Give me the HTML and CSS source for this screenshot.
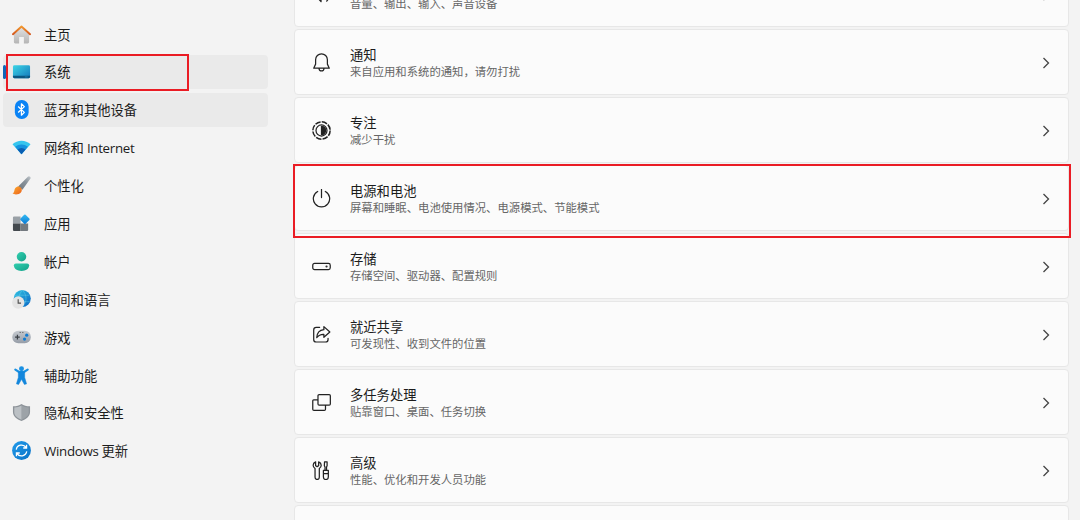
FILE: index.html
```html
<!DOCTYPE html>
<html lang="zh-CN">
<head>
  <meta charset="UTF-8">
  <title>设置</title>
  <link rel="stylesheet" href="styles.css">
</head>
<body>
<div class="settings">
  <nav class="sidebar">
    <a class="nav-item">
      <svg class="nav-icon" viewBox="0 0 20 20">
        <defs>
          <linearGradient id="homeWall" x1="0" y1="0" x2="0" y2="1"><stop offset="0" stop-color="#e2e2e2"/><stop offset="1" stop-color="#b5b5b5"/></linearGradient>
          <linearGradient id="homeRoof" x1="0" y1="0" x2="0" y2="1"><stop offset="0" stop-color="#f2982e"/><stop offset="1" stop-color="#d4561c"/></linearGradient>
        </defs>
        <path d="M2 9.500 10 2l8 7.500V18a1.500 1.500 0 0 1-1.500 1.500H12.500V12.500h-5V19.500H3.500A1.500 1.500 0 0 1 2 18z" fill="url(#homeWall)"/>
        <path d="M1 9.700 10 1.500l9 8.200" fill="none" stroke="url(#homeRoof)" stroke-width="2" stroke-linecap="round" stroke-linejoin="round"/>
      </svg>
      <span>主页</span>
    </a>
    <a class="nav-item active">
      <svg class="nav-icon" viewBox="0 0 20 20">
        <defs><linearGradient id="screen" x1="0" y1="0" x2="1" y2="1"><stop offset="0" stop-color="#3bd5e6"/><stop offset="1" stop-color="#1477bb"/></linearGradient></defs>
        <rect x="1" y="3.500" width="18" height="13.500" rx="1.500" fill="url(#screen)"/>
        <path d="M1 14.500h18v1a1.500 1.500 0 0 1-1.500 1.500h-15A1.500 1.500 0 0 1 1 15.500z" fill="#0b5681"/>
        <path d="M13.500 15.700h3" stroke="#2089b7" stroke-width=".8"/>
      </svg>
      <span>系统</span>
      <i class="mark mark-nav"></i>
    </a>
    <a class="nav-item hover">
      <svg class="nav-icon" viewBox="0 0 20 20">
        <rect x="3" y="0" width="14.500" height="20" rx="7" fill="#0a83f5"/>
        <path d="m6.500 6.800 6.500 6.200-3.100 3V4L13 7l-6.500 6.200" fill="none" stroke="#fff" stroke-width="1.300" stroke-linejoin="round"/>
      </svg>
      <span>蓝牙和其他设备</span>
    </a>
    <a class="nav-item">
      <svg class="nav-icon" viewBox="0 0 20 20">
        <path d="M.500 6.500a14 14 0 0 1 19 0L10 17z" fill="#35c5ee"/>
        <path d="M3.300 9.300a10.500 10.500 0 0 1 13.400 0L10 17z" fill="#1593df"/>
        <path d="M5.800 12.200a6.500 6.500 0 0 1 8.400 0L10 17z" fill="#0a5eb2"/>
      </svg>
      <span>网络和 <span class="latin">Internet</span></span>
    </a>
    <a class="nav-item">
      <svg class="nav-icon" viewBox="0 0 20 20">
        <defs>
          <linearGradient id="handle" x1="0" y1="1" x2="1" y2="0"><stop offset="0" stop-color="#6d7780"/><stop offset=".6" stop-color="#89939b"/><stop offset="1" stop-color="#c0c6cb"/></linearGradient>
          <linearGradient id="bristle" x1="0" y1="0" x2="1" y2="1"><stop offset="0" stop-color="#ffac2e"/><stop offset="1" stop-color="#e9621d"/></linearGradient>
        </defs>
        <path d="M6.500 11 16.700.900a1.600 1.600 0 0 1 2.400 2.200L11 14.500z" fill="url(#handle)"/>
        <path d="M3.300 13c2-2.700 4.800-2.300 6.300-.4 1.700 2.300.2 5.500-2.400 6.300-2.300.7-5 .6-6.800-.4 2.300-.6 1.700-3.400 2.900-5.500z" fill="url(#bristle)"/>
      </svg>
      <span>个性化</span>
    </a>
    <a class="nav-item">
      <svg class="nav-icon" viewBox="0 0 20 20">
        <defs><linearGradient id="tile" x1="0" y1="0" x2="1" y2="1"><stop offset="0" stop-color="#35bdf3"/><stop offset="1" stop-color="#0a78d4"/></linearGradient></defs>
        <path d="M2.200 2.500H9V10H1V3.700a1.200 1.200 0 0 1 1.200-1.200z" fill="#99a0a6"/>
        <path d="M1 10h8v8H2.200A1.200 1.200 0 0 1 1 16.800z" fill="#43494e"/>
        <path d="M9 10h8v6.800a1.200 1.200 0 0 1-1.200 1.200H9z" fill="#73797f"/>
        <rect x="9.800" y="1.700" width="7.600" height="7.600" rx="1" fill="url(#tile)" transform="rotate(45 13.600 5.500)"/>
      </svg>
      <span>应用</span>
    </a>
    <a class="nav-item">
      <svg class="nav-icon" viewBox="0 0 20 20">
        <defs><linearGradient id="person" x1="0" y1="0" x2="1" y2="1"><stop offset="0" stop-color="#33cfaf"/><stop offset="1" stop-color="#12a189"/></linearGradient></defs>
        <circle cx="10" cy="5" r="5" fill="url(#person)"/>
        <path d="M4 12h12a2 2 0 0 1 2 2c0 3.800-3.500 6-8 6s-8-2.200-8-6a2 2 0 0 1 2-2z" fill="url(#person)"/>
      </svg>
      <span>帐户</span>
    </a>
    <a class="nav-item">
      <svg class="nav-icon" viewBox="0 0 20 20">
        <defs><linearGradient id="globe" x1="0" y1="0" x2="1" y2="1"><stop offset="0" stop-color="#30c3e3"/><stop offset="1" stop-color="#0a65c4"/></linearGradient></defs>
        <circle cx="10.800" cy="9" r="9" fill="url(#globe)"/>
        <path d="M3 5.500h15.500M3 12.300h15.700M11 .200c-5 5-5 12 0 17.600M11 .200c5 5 5 12 0 17.600" fill="none" stroke="#6cd7ee" stroke-width=".7" opacity=".6"/>
        <circle cx="6.600" cy="13.200" r="6.500" fill="#e4e4e4"/>
        <path d="M6.500 9.800v4h3" fill="none" stroke="#505050" stroke-width="1.200"/>
      </svg>
      <span>时间和语言</span>
    </a>
    <a class="nav-item">
      <svg class="nav-icon" viewBox="0 0 20 20">
        <defs><linearGradient id="pad" x1="0" y1="0" x2="0" y2="1"><stop offset="0" stop-color="#c5cad0"/><stop offset="1" stop-color="#969da7"/></linearGradient></defs>
        <rect x=".3" y="3" width="19.500" height="13" rx="6.300" fill="url(#pad)"/>
        <path d="M5.700 7v5M3.200 9.500h5" stroke="#3b4046" stroke-width="1.300"/>
        <path d="M8 4.700h1.200M10.800 4.700H12" stroke="#555" stroke-width="1"/>
        <circle cx="15.500" cy="7.600" r="1.700" fill="#127bd1"/>
        <circle cx="13.200" cy="11.600" r="1.700" fill="#127bd1"/>
      </svg>
      <span>游戏</span>
    </a>
    <a class="nav-item">
      <svg class="nav-icon" viewBox="0 0 20 20">
        <circle cx="10" cy="2.800" r="2.600" fill="#1990e2"/>
        <path d="M3.500 3.800 7.500 6.300h5l4-2.500" fill="none" stroke="#1990e2" stroke-width="2.300" stroke-linecap="round" stroke-linejoin="round"/>
        <path d="M6.700 6h6.600v6l2 6.800-2.200.6L10 14l-3.100 5.400-2.200-.6 2-6.800z" fill="#1286dc" stroke="#1286dc" stroke-width=".6" stroke-linejoin="round"/>
      </svg>
      <span>辅助功能</span>
    </a>
    <a class="nav-item">
      <svg class="nav-icon" viewBox="0 0 20 20">
        <path d="M10 1c2.500 1.800 5 2.300 9 2.500v6c0 4.500-4 7.500-9 9.500-5-2-9-5-9-9.500v-6C5 3.300 7.500 2.800 10 1z" fill="#8d9399"/>
        <path d="M10 2.600c2.200 1.400 4.400 1.900 7.600 2.100v5c0 3.600-3.200 6-7.600 7.900z" fill="#9da3a8"/>
        <path d="M10 2.600C7.800 4 5.600 4.500 2.400 4.700v5c0 3.600 3.200 6 7.600 7.900z" fill="#bbc0c4"/>
      </svg>
      <span>隐私和安全性</span>
    </a>
    <a class="nav-item">
      <svg class="nav-icon" viewBox="0 0 20 20">
        <defs><linearGradient id="update" x1="0" y1="0" x2="1" y2="1"><stop offset="0" stop-color="#229bea"/><stop offset="1" stop-color="#0871c6"/></linearGradient></defs>
        <circle cx="10" cy="10" r="9.900" fill="url(#update)"/>
        <path d="M4.500 9A5.600 5.600 0 0 1 14.800 7M15.500 11A5.600 5.600 0 0 1 5.200 13M15.300 4v3.400h-3.500M4.700 16v-3.400h3.500" fill="none" stroke="#fff" stroke-width="1.400"/>
      </svg>
      <span><span class="latin">Windows</span> 更新</span>
    </a>
  </nav>

  <main class="cards">
    <div class="card">
      <svg class="card-icon" viewBox="0 0 20 20"><path d="M1.500 7.500H5L9.500 3v14.500L5 12.500H1.500zM12.500 7c1.500 1.700 1.500 4.300 0 6M15.500 4c3.500 3.600 3.500 9 0 13" stroke-linejoin="round" stroke-linecap="round"/></svg>
      <div class="card-text"><p>音量、输出、输入、声音设备</p></div>
      <svg class="chevron" viewBox="0 0 8 12"><path d="m1.500 1 5 5-5 5"/></svg>
    </div>
    <div class="card">
      <svg class="card-icon" viewBox="0 0 20 20"><path d="M10 .800a6.200 6.200 0 0 0-6.200 6.200v4.700L1.800 16h16.400l-2-4.300V7A6.200 6.200 0 0 0 10 .800zM7.400 16.300a2.600 2.600 0 0 0 5.200 0" stroke-linejoin="round"/></svg>
      <div class="card-text"><h3>通知</h3><p>来自应用和系统的通知，请勿打扰</p></div>
      <svg class="chevron" viewBox="0 0 8 12"><path d="m1.500 1 5 5-5 5"/></svg>
    </div>
    <div class="card">
      <svg class="card-icon" viewBox="0 0 20 20">
        <circle cx="10" cy="10" r="9.100" stroke-width="1.600" stroke-dasharray="5.900 1.247"/>
        <circle cx="10" cy="10" r="5.800" stroke-width="1.300"/>
        <path d="M10 5.600a4.400 4.400 0 0 1 0 8.800z" fill="#222"/>
      </svg>
      <div class="card-text"><h3>专注</h3><p>减少干扰</p></div>
      <svg class="chevron" viewBox="0 0 8 12"><path d="m1.500 1 5 5-5 5"/></svg>
    </div>
    <div class="card">
      <svg class="card-icon" viewBox="0 0 20 20"><path d="M10 .500v8.500M6 2.600a8.600 8.600 0 1 0 8 0" stroke-linecap="round"/></svg>
      <div class="card-text"><h3>电源和电池</h3><p>屏幕和睡眠、电池使用情况、电源模式、节能模式</p></div>
      <svg class="chevron" viewBox="0 0 8 12"><path d="m1.500 1 5 5-5 5"/></svg>
      <i class="mark mark-card"></i>
    </div>
    <div class="card">
      <svg class="card-icon" viewBox="0 0 20 20"><rect x=".8" y="6.700" width="18.400" height="6.600" rx="1.900"/><circle cx="15.300" cy="10" r=".5"/></svg>
      <div class="card-text"><h3>存储</h3><p>存储空间、驱动器、配置规则</p></div>
      <svg class="chevron" viewBox="0 0 8 12"><path d="m1.500 1 5 5-5 5"/></svg>
    </div>
    <div class="card">
      <svg class="card-icon" viewBox="0 0 20 20"><path d="M8 2.500H4.500a2.700 2.700 0 0 0-2.700 2.700v10a2.700 2.700 0 0 0 2.700 2.700h9.700a2.700 2.700 0 0 0 2.700-2.700V14M12.500 1.700l6.300 5.600-6.300 5.600V9.800c-3.500-.2-5.500.8-7.500 3.500.3-5 3-8 7.500-8.400z" stroke-linejoin="round" stroke-linecap="round"/></svg>
      <div class="card-text"><h3>就近共享</h3><p>可发现性、收到文件的位置</p></div>
      <svg class="chevron" viewBox="0 0 8 12"><path d="m1.500 1 5 5-5 5"/></svg>
    </div>
    <div class="card">
      <svg class="card-icon" viewBox="0 0 20 20"><rect x="6.300" y="1.700" width="13" height="11" rx="1.200"/><path d="M6.300 7.200H1.800a1 1 0 0 0-1 1V17a1.200 1.200 0 0 0 1.200 1.200h11a1.200 1.200 0 0 0 1.200-1.200v-4.300"/></svg>
      <div class="card-text"><h3>多任务处理</h3><p>贴靠窗口、桌面、任务切换</p></div>
      <svg class="chevron" viewBox="0 0 8 12"><path d="m1.500 1 5 5-5 5"/></svg>
    </div>
    <div class="card">
      <svg class="card-icon" viewBox="0 0 20 20"><path d="M3.800.900v4l1.600 1 1.600-1v-4c1.700.7 2.700 2 2.700 3.600 0 1.500-.8 2.700-2 3.400V17.200a2.200 2.200 0 0 1-4.500 0V7.900c-1.200-.7-2-1.900-2-3.400C1.200 2.900 2.100 1.600 3.800.900zM13.200.900h2.700v4l-.6 1.500v3.500h-1.600V6.400l-.7-1.500zM12 9.900h5.200v7a2.600 2.600 0 0 1-5.200 0zM12 13.200h5.200" stroke-linejoin="round"/></svg>
      <div class="card-text"><h3>高级</h3><p>性能、优化和开发人员功能</p></div>
      <svg class="chevron" viewBox="0 0 8 12"><path d="m1.500 1 5 5-5 5"/></svg>
    </div>
    <div class="card"></div>
  </main>
</div>
</body>
</html>
```
FILE: styles.css
```css
* {
  box-sizing: border-box;
}

body {
  margin: 0;
  height: 520px;
  overflow: hidden;
  background: #f3f3f3;
  color: #1c1c1c;
  font-family: "Noto Sans CJK SC", sans-serif;
}

.settings {
  display: flex;
  height: 520px;
  overflow: hidden;
}

.sidebar {
  width: 294px;
  padding: 17px 26px 0 3px;
  display: flex;
  flex-direction: column;
  gap: 3.900px;
  flex-shrink: 0;
}

.nav-item {
  position: relative;
  display: flex;
  align-items: center;
  flex-shrink: 0;
  height: 34px;
  padding-left: 9px;
  gap: 13px;
  border-radius: 4px;
  font-size: 13.300px;
  line-height: 20px;
  white-space: nowrap;
}

.nav-item > span {
  padding-top: 1px;
}

.nav-item.active,
.nav-item.hover {
  background: #eaeaea;
}

.nav-item.active::before {
  content: "";
  position: absolute;
  left: 0;
  top: 10px;
  width: 3px;
  height: 14px;
  border-radius: 2px;
  background: #0f66b8;
}

.nav-icon {
  width: 19px;
  height: 19px;
  flex-shrink: 0;
}

.latin {
  font-family: "Open Sans", sans-serif;
  font-size: 13.300px;
  letter-spacing: -0.300px;
}

.cards {
  width: 775px;
  margin-top: -39px;
  display: flex;
  flex-direction: column;
  gap: 2px;
}

.card {
  position: relative;
  display: flex;
  align-items: center;
  flex-shrink: 0;
  height: 66px;
  padding: 0 18px 0 17px;
  background: #fbfbfb;
  border: 1px solid #e7e7e7;
  border-radius: 4px;
}

/* scrolled mostly out of view, only the description is left */
.card:first-child .card-text {
  padding-top: 17px;
}

.card-icon {
  width: 19px;
  height: 19px;
  margin-right: 19px;
  fill: none;
  stroke: #222;
  stroke-width: 1.300;
}

.card-text {
  flex: 1;
}

.card h3 {
  margin: 0;
  font-size: 13.300px;
  font-weight: 400;
  line-height: 17px;
}

.card p {
  margin: 0;
  color: #666;
  font-size: 11.350px;
  line-height: 16px;
}

.chevron {
  width: 8px;
  height: 12px;
  margin-top: 1px;
  fill: none;
  stroke: #444;
  stroke-width: 1.300;
}

/* red highlight frames */
.mark {
  position: absolute;
  z-index: 2;
  border: 2px solid #ea1c24;
}

.mark-nav {
  left: 3px;
  top: -1px;
  width: 183px;
  height: 37px;
}

.mark-card {
  left: -2px;
  top: -2px;
  width: 778px;
  height: 74px;
}
```
